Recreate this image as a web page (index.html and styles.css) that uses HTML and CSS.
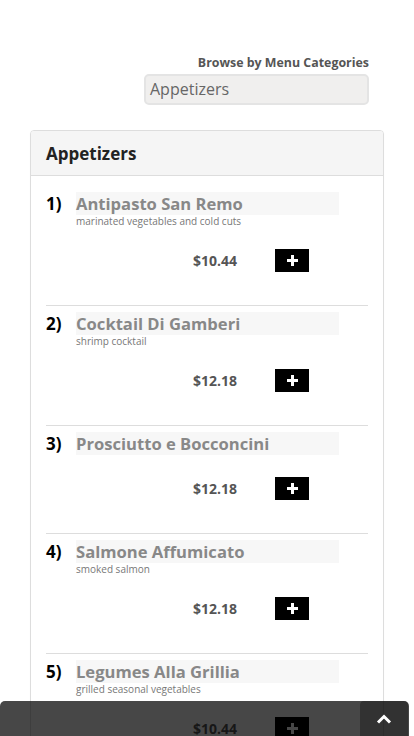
FILE: index.html
```html
<!DOCTYPE html>
<html>
<head>
<meta charset="utf-8">
<link rel="stylesheet" href="styles.css">
</head>
<body>
<div class="browse">
  <div class="browse-inner">
    <div class="browse-label">Browse by Menu Categories</div>
    <div class="select">Appetizers</div>
  </div>
</div>
<div class="panel">
  <div class="panel-head">Appetizers</div>
  <div class="panel-body">
    <div class="item">
      <div class="num">1)</div>
      <div class="info">
        <div class="name">Antipasto San Remo</div>
        <div class="desc">marinated vegetables and cold cuts</div>
      </div>
      <div class="buy"><span class="price">$10.44</span><span class="add"><svg width="11" height="11" viewBox="0 0 11 11"><path d="M4 0h3v4h4v3H7v4H4V7H0V4h4z" fill="#fff"/></svg></span></div>
    </div>
    <div class="item">
      <div class="num">2)</div>
      <div class="info">
        <div class="name">Cocktail Di Gamberi</div>
        <div class="desc">shrimp cocktail</div>
      </div>
      <div class="buy"><span class="price">$12.18</span><span class="add"><svg width="11" height="11" viewBox="0 0 11 11"><path d="M4 0h3v4h4v3H7v4H4V7H0V4h4z" fill="#fff"/></svg></span></div>
    </div>
    <div class="item">
      <div class="num">3)</div>
      <div class="info">
        <div class="name">Prosciutto e Bocconcini</div>
      </div>
      <div class="buy"><span class="price">$12.18</span><span class="add"><svg width="11" height="11" viewBox="0 0 11 11"><path d="M4 0h3v4h4v3H7v4H4V7H0V4h4z" fill="#fff"/></svg></span></div>
    </div>
    <div class="item">
      <div class="num">4)</div>
      <div class="info">
        <div class="name">Salmone Affumicato</div>
        <div class="desc">smoked salmon</div>
      </div>
      <div class="buy"><span class="price">$12.18</span><span class="add"><svg width="11" height="11" viewBox="0 0 11 11"><path d="M4 0h3v4h4v3H7v4H4V7H0V4h4z" fill="#fff"/></svg></span></div>
    </div>
    <div class="item">
      <div class="num">5)</div>
      <div class="info">
        <div class="name">Legumes Alla Grillia</div>
        <div class="desc">grilled seasonal vegetables</div>
      </div>
      <div class="buy"><span class="price">$10.44</span><span class="add"><svg width="11" height="11" viewBox="0 0 11 11"><path d="M4 0h3v4h4v3H7v4H4V7H0V4h4z" fill="#fff"/></svg></span></div>
    </div>
  </div>
</div>
<div class="bottombar">
  <div class="totop"><svg width="16" height="10" viewBox="0 0 16 10"><path d="M2 8.5L8 2.5l6 6" fill="none" stroke="#fff" stroke-width="3"/></svg></div>
</div>
</body>
</html>
```
FILE: styles.css
```css
html, body {
  margin: 0;
  padding: 0;
  background: #fff;
  font-family: "Open Sans", "Liberation Sans", sans-serif;
}
.browse {
  display: flex;
  justify-content: flex-end;
  padding: 54px 45px 0 0;
}
.browse-inner {
  display: flex;
  flex-direction: column;
  align-items: flex-end;
  width: 225px;
}
.browse-label {
  font-size: 12.4px;
  font-weight: 700;
  color: #555;
  line-height: 18px;
  margin-bottom: 2px;
}
.select {
  box-sizing: border-box;
  width: 225px;
  height: 31px;
  background: #f0efee;
  border: 2px solid #e4e4e4;
  border-radius: 5px;
  font-size: 16px;
  color: #666;
  line-height: 27px;
  padding-left: 4px;
}
.panel {
  margin: 25px 30px 0 30px;
  border: 1px solid #ddd;
  border-radius: 4px;
  box-shadow: 0 1px 1px rgba(0,0,0,0.05);
}
.panel-head {
  background: #f5f5f5;
  border-bottom: 1px solid #ddd;
  border-radius: 3px 3px 0 0;
  height: 45px;
  box-sizing: border-box;
  padding: 0 15px;
  font-size: 17px;
  font-weight: 700;
  color: #222;
  line-height: 45px;
}
.panel-body {
  padding: 0 15px;
}
.item {
  display: grid;
  grid-template-columns: 30px 263px;
  padding: 16px 0 33px;
  border-bottom: 1px solid #ddd;
}
.item + .item {
  padding-top: 6px;
}
.num {
  font-size: 17px;
  font-weight: 700;
  color: #000;
  line-height: 23px;
}
.name {
  background: #f7f7f7;
  font-size: 16.6px;
  font-weight: 700;
  color: #888;
  line-height: 23px;
  height: 23px;
}
.desc {
  font-size: 10px;
  color: #777;
  line-height: 12px;
}
.buy {
  grid-column: 1 / 3;
  display: flex;
  align-items: center;
  padding-left: 147px;
  margin-top: 22px;
  height: 23px;
}
.price {
  width: 82px;
  font-size: 14px;
  font-weight: 700;
  color: #555;
}
.add {
  width: 34px;
  height: 23px;
  background: #000;
  display: flex;
  align-items: center;
  justify-content: center;
}
.add svg { display: block; }
.bottombar {
  position: fixed;
  left: 0;
  bottom: 0;
  width: 409px;
  height: 35px;
  background: rgba(0,0,0,0.72);
  border-radius: 5px 5px 0 0;
  display: flex;
  justify-content: flex-end;
}
.totop {
  width: 48px;
  height: 35px;
  margin-right: 1px;
  background: rgba(0,0,0,0.3);
  border-radius: 4px 4px 0 0;
  display: flex;
  align-items: center;
  justify-content: center;
}
.totop svg { display: block; }
```
